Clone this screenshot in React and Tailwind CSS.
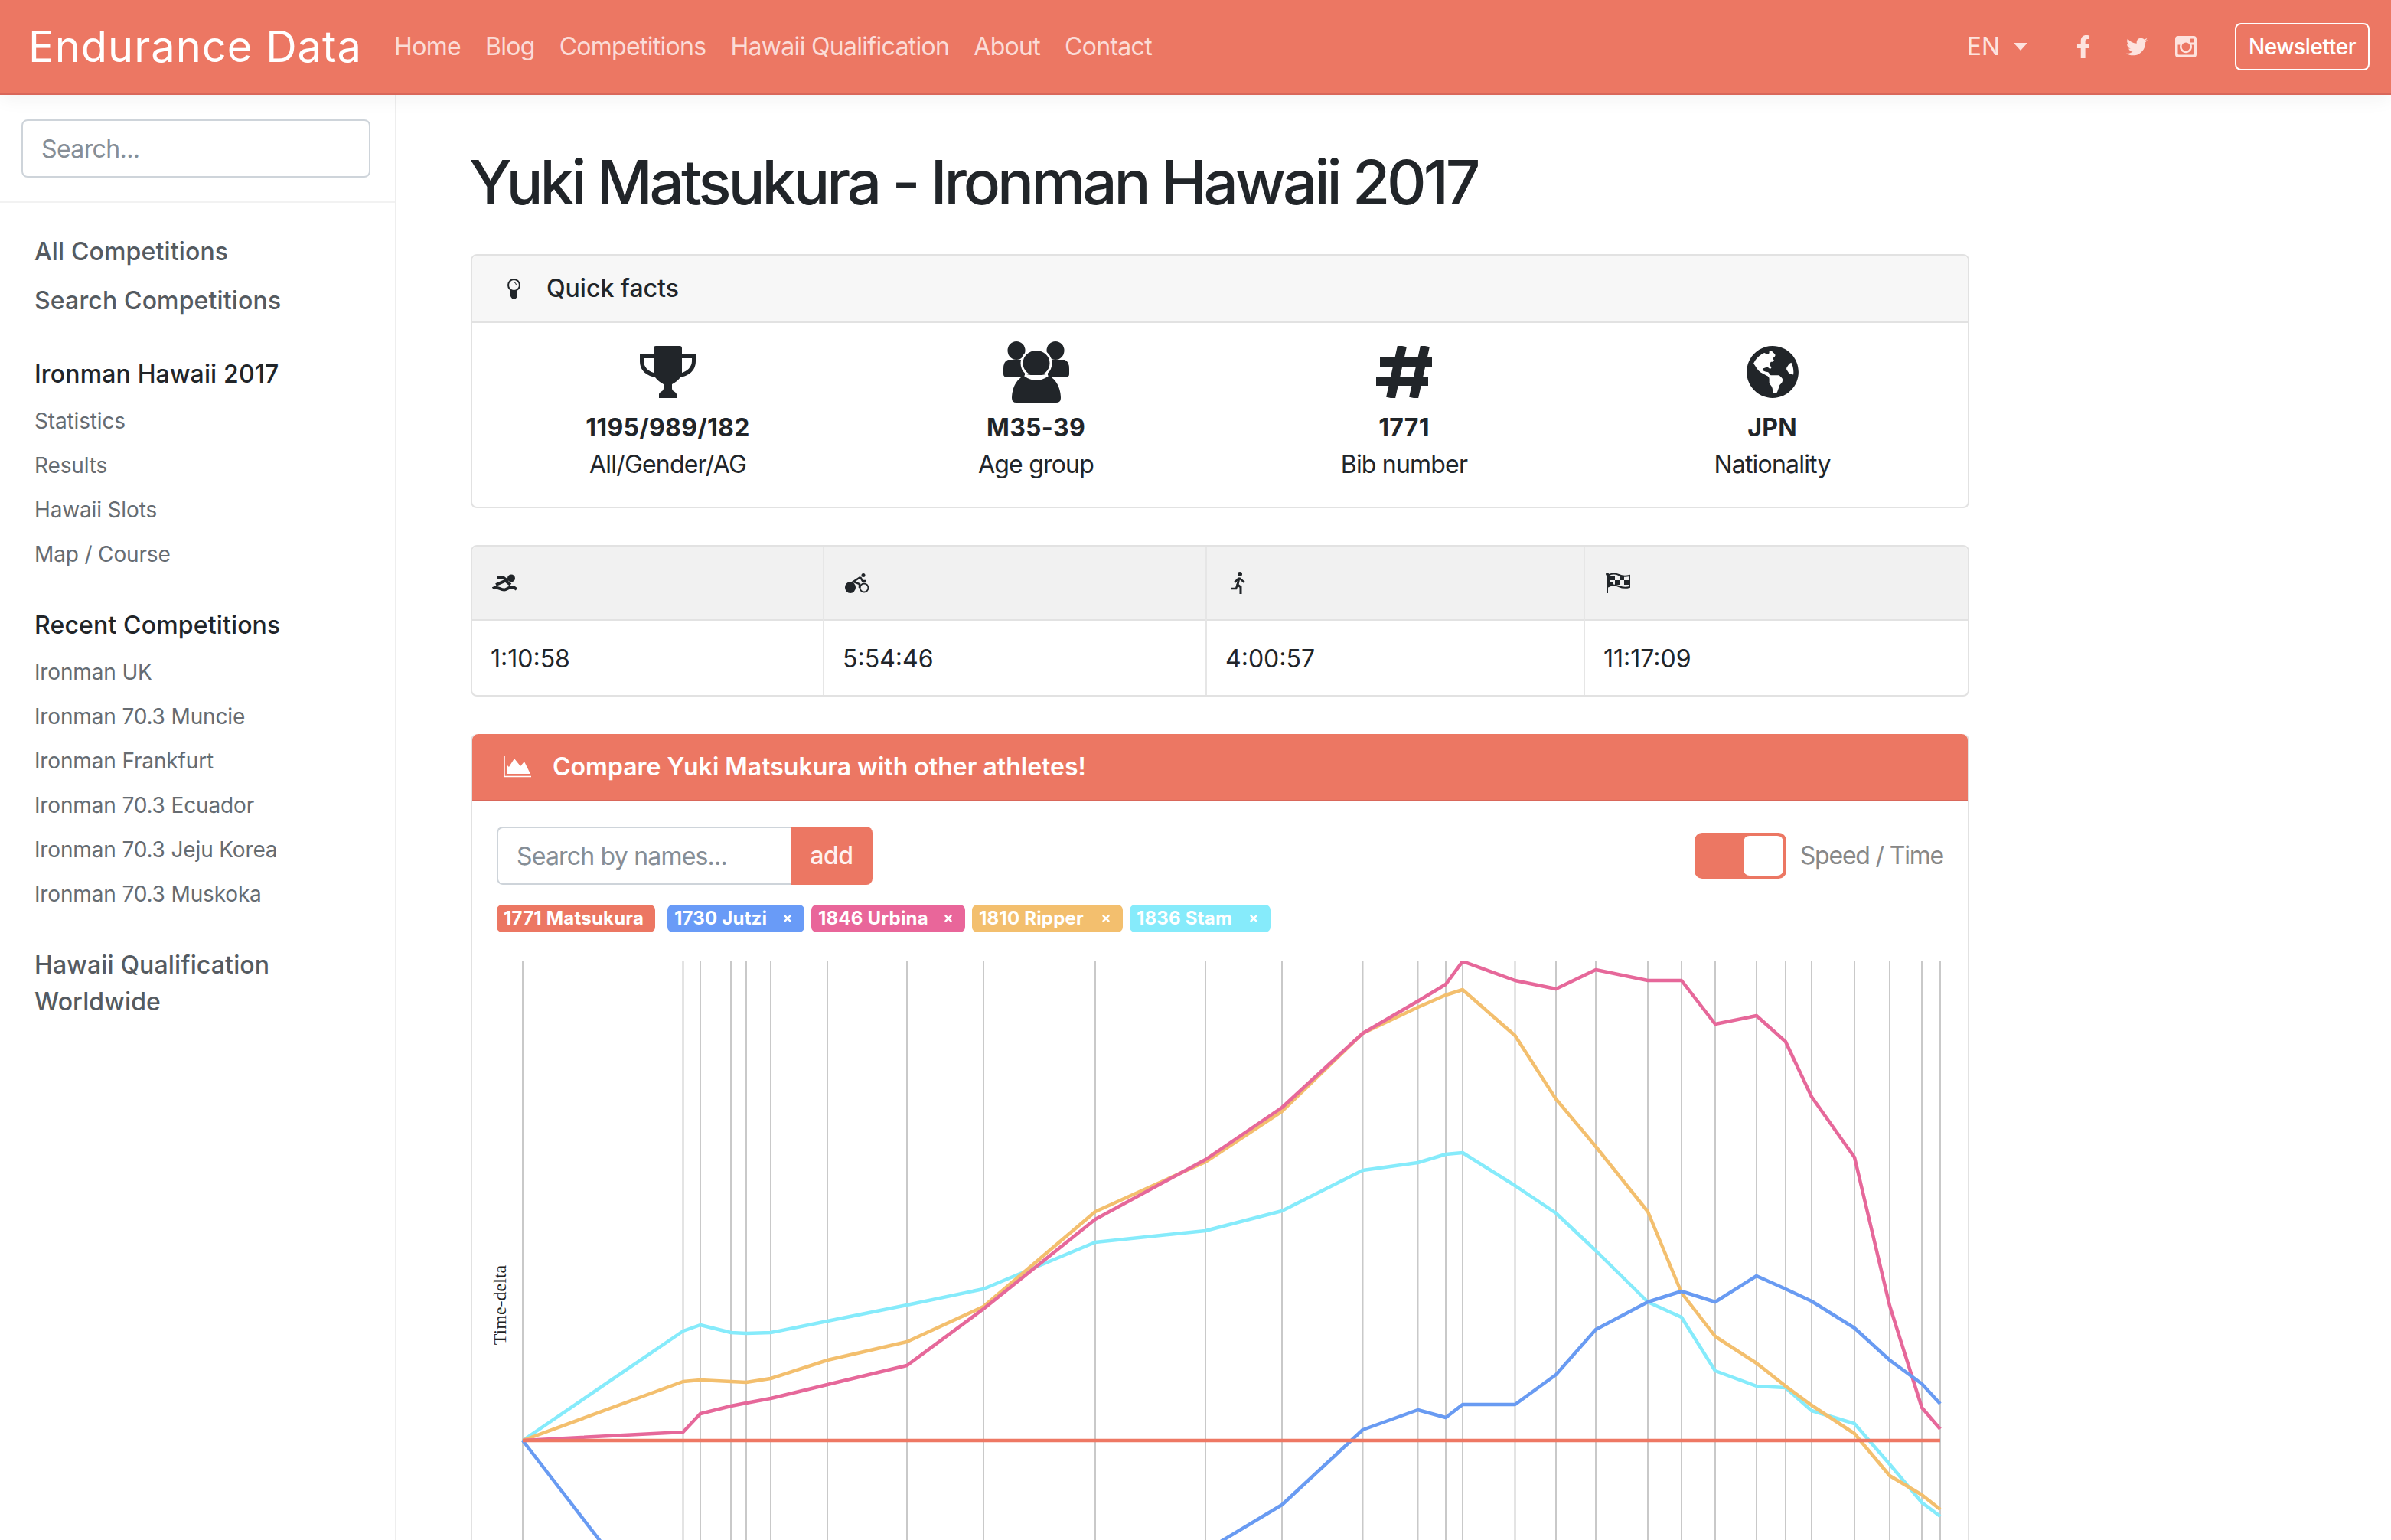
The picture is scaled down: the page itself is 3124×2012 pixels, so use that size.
import React from "react";
import { FaGlobeAmericas, FaFacebookF, FaTwitter, FaTimes } from "react-icons/fa";

const navLinks = [
  { label: "Home", className: "ml-[42px]" },
  { label: "Blog", className: "ml-[32px]" },
  { label: "Competitions", className: "ml-[32px]" },
  { label: "Hawaii Qualification", className: "ml-[32px]" },
  { label: "About", className: "ml-[32px]" },
  { label: "Contact", className: "ml-[32px]" },
];

const raceLinks = ["Statistics", "Results", "Hawaii Slots", "Map / Course"];
const recentLinks = [
  "Ironman UK",
  "Ironman 70.3 Muncie",
  "Ironman Frankfurt",
  "Ironman 70.3 Ecuador",
  "Ironman 70.3 Jeju Korea",
  "Ironman 70.3 Muskoka",
];

function TrophyIcon() {
  return (
    <svg width="73" height="68" viewBox="0 0 73 68" fill="currentColor">
      <path
        fillRule="evenodd"
        d="M18 3Q18 0 21 0H52Q55 0 55 3V11H73V20C73 33 63 39 53 41C50 45 46 48 42 50V55C42 60 47 59 48 63V68H25V63C26 59 31 60 31 55V50C27 48 23 45 20 41C10 39 0 33 0 20V11H18ZM5 16V20C5 27 11 33 18 35C18 29 18 22 18 16ZM68 16H55C55 22 55 29 55 35C62 33 68 27 68 20Z"
      />
    </svg>
  );
}

function PeopleIcon() {
  return (
    <svg width="86" height="80" viewBox="0 0 86 80" fill="currentColor">
      <ellipse cx="17" cy="12" rx="11.5" ry="12" />
      <ellipse cx="68" cy="12" rx="11.5" ry="12" />
      <path d="M6 24Q0 26 0 36V43Q0 47 6 47H28V24ZM80 24Q86 26 86 36V43Q86 47 80 47H58V24Z" />
      <ellipse cx="43" cy="28.5" rx="19" ry="18" stroke="white" strokeWidth="3" />
      <path d="M22 48C27 41 59 41 64 48C72 54 75 66 75 74Q75 80 69 80H17Q11 80 11 74C11 66 14 54 22 48Z" />
      <path d="M28 44Q43 55 58 44" fill="white" stroke="white" strokeWidth="3" />
    </svg>
  );
}

function HashIcon() {
  return (
    <svg width="76" height="68" viewBox="0 0 76 68" stroke="currentColor" strokeWidth="12" fill="none">
      <path d="M35 0L20 68M65 0L50 68M6 21H74M1 46H69" />
    </svg>
  );
}

function BulbIcon() {
  return (
    <svg width="19" height="27" viewBox="0 0 19 27" className="text-[#212529]">
      <circle cx="9.5" cy="8.5" r="7.5" fill="none" stroke="currentColor" strokeWidth="2" />
      <path d="M5 15H14V23Q12 27 9.5 27Q7 27 5 23Z" fill="currentColor" />
      <path d="M9 4.5Q12 5 12.5 8" fill="none" stroke="currentColor" strokeWidth="1" />
    </svg>
  );
}

function SwimIcon() {
  return (
    <svg width="33" height="23" viewBox="0 0 33 23" className="ml-[2px]">
      <circle cx="25" cy="5.5" r="5" fill="currentColor" />
      <path d="M6 4H14L19 8L5 14" fill="none" stroke="currentColor" strokeWidth="4" strokeLinejoin="round" />
      <path d="M18 9L24 14" fill="none" stroke="currentColor" strokeWidth="4" />
      <path d="M1 19C7 14 12 23 18 20S27 15 32 20" fill="none" stroke="currentColor" strokeWidth="4" />
    </svg>
  );
}

function BikeIcon() {
  return (
    <svg width="32" height="26" viewBox="0 0 32 26" className="ml-[3px]">
      <ellipse cx="7" cy="18.5" rx="7" ry="7.5" fill="currentColor" />
      <circle cx="25" cy="19" r="5.5" fill="none" stroke="currentColor" strokeWidth="2" />
      <circle cx="24" cy="2.5" r="2.5" fill="currentColor" />
      <path d="M20 5L11 11L19 14V19M20 5L23 10H28" fill="none" stroke="currentColor" strokeWidth="2.5" />
    </svg>
  );
}

function RunIcon() {
  return (
    <svg width="21" height="29" viewBox="0 0 21 29" className="ml-[6px]">
      <circle cx="13" cy="3" r="3" fill="currentColor" />
      <path d="M12 8L10 17L14 20V29" fill="none" stroke="currentColor" strokeWidth="3" />
      <path d="M10 16L8 22H1M12 8L6 14M12 8L19 14" fill="none" stroke="currentColor" strokeWidth="2.5" />
    </svg>
  );
}

function FinishIcon() {
  return (
    <svg width="32" height="27" viewBox="0 0 32 27" className="ml-[3px]">
      <circle cx="2" cy="2" r="2" fill="currentColor" />
      <path d="M2 2V27" stroke="currentColor" strokeWidth="2" />
      <path d="M4 3Q11 0 17 3T31 4V19Q24 21 17 18T4 18Z" fill="none" stroke="currentColor" strokeWidth="2" />
      <path d="M6 4H12V10H6ZM18 4H24V10H18ZM12 10H18V16H12ZM24 10H30V16H24ZM5 12H9V17H5Z" fill="currentColor" />
    </svg>
  );
}

function AreaIcon() {
  return (
    <svg width="36" height="28" viewBox="0 0 36 28" fill="white">
      <path d="M1 0V26.5H36" fill="none" stroke="white" strokeWidth="1.5" />
      <path d="M4 23V11L7 14L14 3L22 13L27 7L35 23Z" />
    </svg>
  );
}

function InstagramIcon() {
  return (
    <svg width="28" height="28" viewBox="0 0 28 28" fill="currentColor">
      <path
        fillRule="evenodd"
        d="M4 0h20a4 4 0 0 1 4 4v20a4 4 0 0 1-4 4H4a4 4 0 0 1-4-4V4a4 4 0 0 1 4-4zm16.5 3.5a1 1 0 0 0-1 1v3a1 1 0 0 0 1 1h3a1 1 0 0 0 1-1v-3a1 1 0 0 0-1-1zM3.5 11.5V23a1.5 1.5 0 0 0 1.5 1.5h18a1.5 1.5 0 0 0 1.5-1.5V11.5h-3a8 8 0 1 1-15 0zM14 8.5a5.5 5.5 0 1 0 0 11 5.5 5.5 0 0 0 0-11z"
      />
    </svg>
  );
}

const facts = [
  { icon: <TrophyIcon />, value: "1195/989/182", label: "All/Gender/AG" },
  { icon: <PeopleIcon />, value: "M35-39", label: "Age group" },
  { icon: <HashIcon />, value: "1771", label: "Bib number" },
  { icon: <FaGlobeAmericas size={70} />, value: "JPN", label: "Nationality" },
];

const splits = [
  { icon: <SwimIcon />, time: "1:10:58" },
  { icon: <BikeIcon />, time: "5:54:46" },
  { icon: <RunIcon />, time: "4:00:57" },
  { icon: <FinishIcon />, time: "11:17:09" },
];

const tags = [
  { label: "1771 Matsukura", className: "bg-[#ec7763] w-[207px]", removable: false },
  { label: "1730 Jutzi", className: "bg-[#699bf7] w-[179px] ml-[16px]", removable: true },
  { label: "1846 Urbina", className: "bg-[#e9669a] w-[201px] ml-[9px]", removable: true },
  { label: "1810 Ripper", className: "bg-[#f3bf6e] w-[197px] ml-[9px]", removable: true },
  { label: "1836 Stam", className: "bg-[#86ebfb] w-[184px] ml-[9px]", removable: true },
];

// x positions of the chart's vertical lines, in page pixels
const xs = [
  683, 892.5, 915, 955, 975, 1007, 1081, 1185, 1285, 1431, 1575, 1675, 1780.5,
  1852.5, 1889, 1911, 1979.5, 2033, 2085, 2153, 2197, 2241, 2295, 2333, 2367,
  2423, 2469, 2511, 2535,
];

// y values per split, in page pixels
const series = [
  {
    color: "#86ebfb",
    ys: [
      1882, 1739, 1731, 1741, 1742, 1741, 1726, 1705, 1684, 1623, 1608, 1582,
      1529, 1519, 1508, 1506, 1549, 1585, 1634, 1701, 1721, 1791, 1811, 1813,
      1843, 1860, 1913, 1963, 1981,
    ],
  },
  {
    color: "#f3bf6e",
    ys: [
      1882, 1805, 1803, 1805, 1806, 1801, 1777, 1753, 1707, 1583, 1518, 1452,
      1350, 1316, 1300, 1293, 1353, 1436, 1498, 1583, 1689, 1746, 1781, 1811,
      1836, 1873, 1928, 1953, 1972,
    ],
  },
  {
    color: "#e6689a",
    ys: [
      1882, 1871, 1847, 1837, 1833, 1827, 1809, 1784, 1710, 1593, 1515, 1447,
      1350, 1308, 1286, 1256, 1281, 1292, 1267, 1281, 1281, 1338, 1327, 1361,
      1433, 1512, 1706, 1839, 1867,
    ],
  },
  {
    color: "#699bf2",
    ys: [
      1882, 2154, 2190, 2230, 2250, 2270, 2290, 2270, 2230, 2120, 2026, 1966,
      1868, 1842, 1852, 1835, 1835, 1796, 1737, 1701, 1687, 1701, 1667, 1684,
      1700, 1735, 1777, 1808, 1834,
    ],
  },
  {
    color: "#ee7864",
    ys: xs.map(() => 1882),
  },
];

function toPoints(ys) {
  return ys.map((y, i) => `${xs[i] - 617},${y - 1256}`).join(" ");
}

function Navbar() {
  return (
    <header className="relative z-10 flex h-[124px] shrink-0 items-center border-b-[3px] border-[#d9675a] bg-[#ec7763] pl-[37px] shadow-[0_4px_24px_rgba(0,0,0,0.06)]">
      <a className="text-[56px] leading-none font-normal tracking-[1px] text-white">Endurance Data</a>
      {navLinks.map((link) => (
        <a key={link.label} className={`text-[32px] tracking-[-0.7px] text-[#fbdcd7] ${link.className}`}>
          {link.label}
        </a>
      ))}
      <div className="ml-auto flex items-center pr-[28px] text-[#fde3de]">
        <span className="text-[32px]">EN</span>
        <span className="ml-[18px] h-0 w-0 border-x-[9px] border-t-[10px] border-x-transparent border-t-[#fde3de]" />
        <FaFacebookF size={30} className="ml-[58px]" />
        <FaTwitter size={28} className="ml-[41px]" />
        <span className="ml-[36px]">
          <InstagramIcon />
        </span>
        <button className="ml-[50px] h-[62px] w-[176px] rounded-[8px] border-2 border-white pt-[1px] text-[28px] font-medium tracking-[-0.4px] text-white">
          Newsletter
        </button>
      </div>
    </header>
  );
}

function Sidebar() {
  return (
    <aside className="w-[518px] shrink-0 border-r-2 border-[#eeeeee]">
      <div className="border-b-2 border-[#f2f2f2] px-[28px] pt-[32px] pb-[31px]">
        <input
          placeholder="Search..."
          className="h-[76px] w-[456px] rounded-[8px] border-2 border-[#ced4da] px-[24px] text-[32px] tracking-[-0.6px] placeholder:text-[#868e96]"
        />
      </div>
      <nav className="pt-[32px] pl-[45px] text-[#555b61]">
        <a className="block text-[32px] leading-[64px] font-medium tracking-[0.15px]">All Competitions</a>
        <a className="block text-[32px] leading-[64px] font-medium tracking-[0.15px]">Search Competitions</a>
        <div className="mt-[32px] text-[32px] leading-[64px] font-medium tracking-[0.15px] text-[#212529]">Ironman Hawaii 2017</div>
        {raceLinks.map((item) => (
          <a key={item} className="block text-[28px] leading-[58px] tracking-[-0.15px] text-[#666c72]">
            {item}
          </a>
        ))}
        <div className="mt-[32px] text-[32px] leading-[64px] font-medium tracking-[0.15px] text-[#212529]">Recent Competitions</div>
        {recentLinks.map((item) => (
          <a key={item} className="block text-[28px] leading-[58px] tracking-[-0.15px] text-[#666c72]">
            {item}
          </a>
        ))}
        <a className="mt-[40px] block w-[400px] text-[32px] leading-[48px] font-medium tracking-[0.15px]">
          Hawaii Qualification Worldwide
        </a>
      </nav>
    </aside>
  );
}

function QuickFacts() {
  return (
    <section className="h-[332px] w-[1958px] rounded-[8px] border-2 border-[#e2e2e2]">
      <div className="flex h-[88px] items-center rounded-t-[6px] border-b-2 border-[#e2e2e2] bg-[#f7f7f7] pl-[45px]">
        <BulbIcon />
        <span className="ml-[33px] text-[32px] font-medium text-[#212529]">Quick facts</span>
      </div>
      <div className="grid grid-cols-4 px-[15px] pt-[24px] text-center text-[#212529]">
        {facts.map((fact) => (
          <div key={fact.value} className="flex flex-col items-center">
            <div className="flex h-[80px] items-center">{fact.icon}</div>
            <div className="mt-[9px] text-[32px] leading-[48px] font-bold tracking-[0.3px]">{fact.value}</div>
            <div className="text-[32px] leading-[48px] tracking-[-0.8px]">{fact.label}</div>
          </div>
        ))}
      </div>
    </section>
  );
}

function SplitsTable() {
  return (
    <section className="mt-[48px] grid h-[198px] w-[1958px] grid-cols-[458px_500px_494px_1fr] rounded-[8px] border-2 border-[#e2e2e2] text-[#212529]">
      {splits.map((split, i) => (
        <div key={split.time} className={i > 0 ? "border-l-2 border-[#e6e6e6]" : ""}>
          <div className={`flex h-[97px] items-center border-b-2 border-[#e2e2e2] bg-[#f1f1f1] pl-[24px] ${i === 0 ? "rounded-tl-[6px]" : ""} ${i === 3 ? "rounded-tr-[6px]" : ""}`}>
            {split.icon}
          </div>
          <div className="flex h-[97px] items-center pt-[2px] pl-[24px] text-[32px]">{split.time}</div>
        </div>
      ))}
    </section>
  );
}

function Chart() {
  return (
    <svg width="1954" height="900" viewBox="0 0 1954 900" className="mt-[38px] block">
      {xs.map((x) => (
        <line key={x} x1={x - 617} x2={x - 617} y1="0" y2="900" stroke="#c9c9c9" strokeWidth="2" />
      ))}
      <text
        x="0"
        y="0"
        transform="translate(44 449) rotate(-90)"
        textAnchor="middle"
        fontSize="24"
        fontFamily="'Liberation Serif', serif"
        fill="#222"
      >
        Time-delta
      </text>
      {series.map((s) => (
        <polyline key={s.color} points={toPoints(s.ys)} fill="none" stroke={s.color} strokeWidth="4.5" strokeLinejoin="round" />
      ))}
    </svg>
  );
}

function CompareCard() {
  return (
    <section className="mt-[49px] w-[1958px] rounded-t-[8px] border-x-2 border-[#e2e2e2]">
      <div className="flex h-[88px] items-center rounded-t-[8px] border-b-2 border-[#d9675a] bg-[#ec7763] pl-[41px] text-white">
        <AreaIcon />
        <span className="ml-[28px] text-[32px] font-semibold">Compare Yuki Matsukura with other athletes!</span>
      </div>
      <div className="flex items-center justify-between px-[32px] pt-[33px]">
        <div className="flex">
          <input
            placeholder="Search by names..."
            className="h-[76px] w-[384px] rounded-l-[8px] border-2 border-r-0 border-[#ced4da] px-[24px] text-[32px] tracking-[-0.8px] placeholder:text-[#868e96]"
          />
          <button className="h-[76px] w-[107px] rounded-r-[8px] bg-[#ec7763] text-[32px] font-medium tracking-[-0.4px] text-[#fff1ee]">add</button>
        </div>
        <div className="flex items-center">
          <div className="flex h-[60px] w-[120px] justify-end rounded-[10px] bg-[#ec7763] p-[4px]">
            <div className="h-[52px] w-[52px] rounded-[8px] bg-white" />
          </div>
          <span className="ml-[18px] text-[32px] tracking-[-1.2px] text-[#888888]">Speed / Time</span>
        </div>
      </div>
      <div className="mt-[26px] flex pl-[32px]">
        {tags.map((tag) => (
          <span
            key={tag.label}
            className={`flex h-[36px] items-center justify-between rounded-[7px] px-[9px] text-[24px] font-bold tracking-[0.2px] whitespace-nowrap text-white ${tag.className}`}
          >
            {tag.label}
            {tag.removable && <FaTimes size={14} className="mr-[6px]" />}
          </span>
        ))}
      </div>
      <Chart />
    </section>
  );
}

export default function App() {
  return (
    <div className="flex h-[2012px] w-[3124px] flex-col overflow-hidden bg-white font-['Inter','Liberation_Sans',sans-serif]">
      <Navbar />
      <div className="flex flex-1">
        <Sidebar />
        <main className="pl-[97px]">
          <h1 className="-ml-[2px] pt-[66px] pb-[46px] text-[80px] leading-[96px] font-medium tracking-[-4.05px] text-[#212529]">
            Yuki Matsukura - Ironman Hawaii 2017
          </h1>
          <QuickFacts />
          <SplitsTable />
          <CompareCard />
        </main>
      </div>
    </div>
  );
}
